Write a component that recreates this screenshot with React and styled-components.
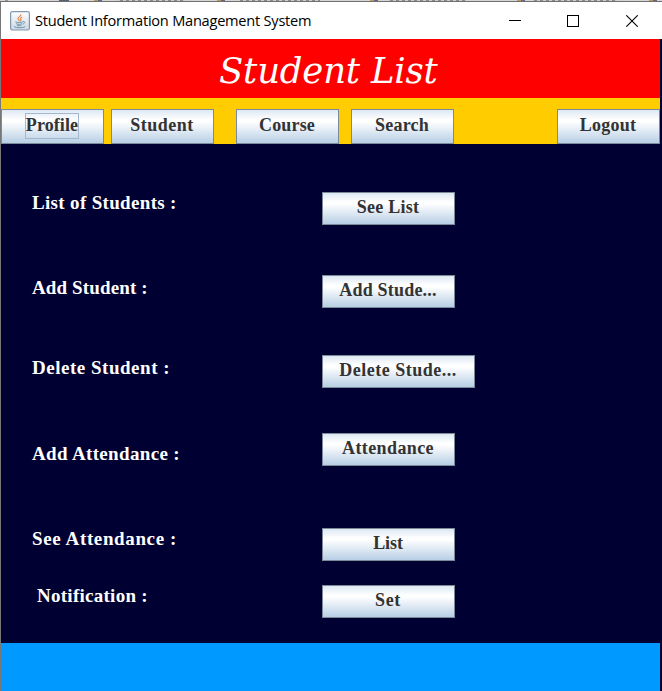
import React from 'react';
import styled, { createGlobalStyle } from 'styled-components';

const GlobalStyle = createGlobalStyle`
  * { box-sizing: border-box; }
  body { margin: 0; background: #000033; overflow: hidden; }
`;

const Desktop = styled.div`
  width: 662px;
  height: 691px;
  display: flex;
  flex-direction: column;
  background: #000033;
`;

/* Sliver of the window behind, showing above the title bar. */
const BackgroundEdge = styled.div`
  height: 1px;
  flex: none;
  background:
    linear-gradient(90deg,
      transparent 5px, #999 5px 8px, transparent 8px 59px, #536270 59px 69px,
      transparent 69px 94px, #c49b50 94px 98px, #5c6a90 98px 102px, transparent 102px 217px,
      #c49b50 217px 221px, #5c6a90 221px 225px, transparent 225px 370px,
      #c49b50 370px 374px, #5c6a90 374px 378px, transparent 378px 517px,
      #c49b50 517px 521px, #5c6a90 521px 525px, transparent 525px 649px,
      #c49b50 649px 653px, #5c6a90 653px 657px, transparent 657px),
    linear-gradient(90deg,
      #d5d5d5 117px, transparent 117px 185px, #d5d5d5 185px 240px, transparent 240px 320px,
      #d5d5d5 320px 388px, transparent 388px 467px, #d5d5d5 467px 534px, transparent 534px 617px,
      #d5d5d5 617px),
    repeating-linear-gradient(90deg, #8b8b8b 0 3px, #cecece 3px 6px);
`;

const Window = styled.div`
  flex: 1;
  min-height: 0;
  display: flex;
  flex-direction: column;
  border-top: 1px solid #707070;
  border-left: 1px solid #777777;
`;

const TitleBar = styled.header`
  height: 37px;
  flex: none;
  display: flex;
  align-items: center;
  padding-left: 9px;
  background: #ffffff;
`;

const WindowTitle = styled.span`
  flex: 1;
  margin-left: 5px;
  padding-bottom: 2px;
  font: 14.6px/20px "Open Sans", sans-serif;
  letter-spacing: -0.24px;
  color: #000;
  white-space: nowrap;
`;

const WindowControls = styled.div`
  display: grid;
  grid-template-columns: repeat(3, 58.5px);
  justify-items: center;
  margin-right: 1px;
`;

const Content = styled.main`
  width: 659px;
  flex: 1;
  display: flex;
  flex-direction: column;
`;

const Banner = styled.h1`
  height: 59px;
  flex: none;
  margin: 0;
  padding-left: 218px;
  background: #ff0000;
  color: #fff;
  font: italic 35.5px/63px "DejaVu Serif", serif;
  letter-spacing: -0.2px;
  white-space: nowrap;
`;

const NavBar = styled.nav`
  height: 46px;
  flex: none;
  display: flex;
  align-items: flex-end;
  background: #ffcc00;
`;

const Button = styled.button`
  width: ${p => p.$width || 133}px;
  height: 33px;
  flex: none;
  display: flex;
  justify-content: center;
  align-items: flex-start;
  padding: 4px 1px 0 0;
  margin: 0;
  border: 1px solid #7a8a99;
  border-radius: 0;
  background: linear-gradient(#dde8f3 0%, #ffffff 30%, #ffffff 35%, #b8cfe5 100%);
  color: #333333;
  font: bold 18px/21px "Liberation Serif", serif;
  letter-spacing: ${p => p.$spacing || 0}px;
  white-space: nowrap;
`;

const NavButton = styled(Button)`
  width: 103px;
  height: 35px;
  padding-top: ${p => (p.$focused ? 3 : 5)}px;
  margin-left: ${p => p.$gap}px;
`;

const FocusRing = styled.span`
  height: 26px;
  padding-top: 1px;
  border: 1px solid #a3b8cc;
`;

const Options = styled.section`
  height: 499px;
  flex: none;
  padding-top: 48px;
  background: #000033;
`;

const OptionRow = styled.div`
  display: grid;
  grid-template-columns: 290px auto;
  justify-content: start;
  padding-left: 31px;
  height: ${p => p.$height}px;
`;

const OptionLabel = styled.span`
  color: #fff;
  font: bold 19px/22px "Liberation Serif", serif;
  letter-spacing: ${p => p.$spacing}px;
  margin-top: ${p => p.$top}px;
  margin-left: ${p => p.$indent || 0}px;
  white-space: nowrap;
`;

const Footer = styled.footer`
  flex: 1;
  background: #0099ff;
`;

const JavaIcon = () => (
  <svg width="20" height="20" viewBox="0 0 20 20" fill="none">
    <defs>
      <linearGradient id="tile" x1="0" y1="0" x2="0" y2="1">
        <stop offset="0" stopColor="#ffffff" />
        <stop offset="1" stopColor="#cbd7e2" />
      </linearGradient>
    </defs>
    <rect x="0.6" y="0.6" width="18.8" height="18.4" rx="1.8" fill="url(#tile)" stroke="#8098b0" strokeWidth="1.2" />
    <path d="M10.8 3.2c.8 2-3.1 2.7-2.8 4.5.1.9 1.6 1.5 1.4 2.5M12.3 6c-2 .8-2.3 1.6-1.4 2.5.5.6.1 1.2-.5 1.7" stroke="#e58a48" strokeWidth="1.2" />
    <path d="M5.4 10.9c2 .8 5.8.7 7.5 0M6.2 12.7c1.7.8 4.5.8 6 0M6.9 14.3c1.5.6 3.2.6 4.5 0M13 10.6c2.6-.5 2 2-.2 2.5M4.2 15.6c2 1.5 9 1.5 11 0" stroke="#6e94ad" strokeWidth="1" />
  </svg>
);

const navItems = [
  { text: 'Profile', gap: 0, spacing: 0.1, focused: true },
  { text: 'Student', gap: 7, spacing: 0.5 },
  { text: 'Course', gap: 22, spacing: 0.15 },
  { text: 'Search', gap: 12, spacing: 0.2 },
  { text: 'Logout', gap: 103, spacing: 0.25 },
];

const options = [
  { label: 'List of Students :', ls: 0.33, top: 0, button: 'See List', bs: 0.25, height: 83 },
  { label: 'Add Student :', ls: 0.13, top: 2, button: 'Add Stude...', bs: 0.2, height: 80 },
  { label: 'Delete Student :', ls: 0.52, top: 2, button: 'Delete Stude...', bs: 0.5, height: 78, width: 153 },
  { label: 'Add Attendance :', ls: 0.34, top: 10, button: 'Attendance', bs: 0.4, height: 95 },
  { label: 'See Attendance :', ls: 0.62, top: 0, button: 'List', bs: -0.1, height: 57 },
  { label: 'Notification :', ls: 0.27, top: 0, indent: 5, button: 'Set', bs: 0.7, height: 33 },
];

export default function App() {
  return (
    <Desktop>
      <GlobalStyle />
      <BackgroundEdge />
      <Window>
        <TitleBar>
          <JavaIcon />
          <WindowTitle>Student Information Management System</WindowTitle>
          <WindowControls>
            <svg width="12" height="12" shapeRendering="crispEdges"><path d="M0 5.5h12" stroke="#000" /></svg>
            <svg width="12" height="12" shapeRendering="crispEdges"><rect x=".5" y=".5" width="11" height="11" fill="none" stroke="#000" /></svg>
            <svg width="12" height="12"><path d="M.3.3l11.4 11.4M11.7.3L.3 11.7" stroke="#000" strokeWidth="1.1" /></svg>
          </WindowControls>
        </TitleBar>
        <Content>
          <Banner>Student List</Banner>
          <NavBar>
            {navItems.map(n => (
              <NavButton key={n.text} $gap={n.gap} $spacing={n.spacing} $focused={n.focused}>
                {n.focused ? <FocusRing>{n.text}</FocusRing> : n.text}
              </NavButton>
            ))}
          </NavBar>
          <Options>
            {options.map(o => (
              <OptionRow key={o.label} $height={o.height}>
                <OptionLabel $spacing={o.ls} $top={o.top} $indent={o.indent}>{o.label}</OptionLabel>
                <Button $width={o.width} $spacing={o.bs}>{o.button}</Button>
              </OptionRow>
            ))}
          </Options>
          <Footer />
        </Content>
      </Window>
    </Desktop>
  );
}
